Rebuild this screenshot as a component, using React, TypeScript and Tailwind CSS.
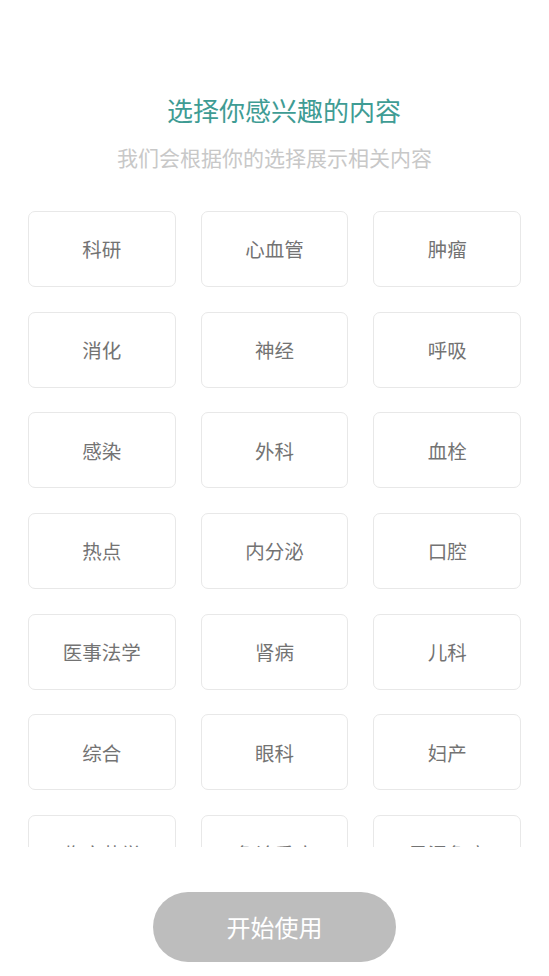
import React from 'react';

const topics = [
    '科研', '心血管', '肿瘤',
    '消化', '神经', '呼吸',
    '感染', '外科', '血栓',
    '热点', '内分泌', '口腔',
    '医事法学', '肾病', '儿科',
    '综合', '眼科', '妇产',
    '临床药学', '急诊重症', '风湿免疫',
];

export default function App() {
    return (
        <div
            className="flex flex-col h-[976px] w-[549px] bg-white overflow-hidden"
            style={{ fontFamily: '"Noto Sans CJK SC", "Noto Sans", sans-serif' }}
        >
            {/* Header */}
            <header className="flex flex-col items-center pt-[92px] pb-[39px]">
                <h1 className="ml-[19px] text-[26px] leading-[36px] font-normal text-[#3f9c94]">选择你感兴趣的内容</h1>
                <p className="mt-[14px] text-[21px] leading-[30px] text-[#c8c8c8]">我们会根据你的选择展示相关内容</p>
            </header>

            {/* Topic grid */}
            <div className="h-[636px] overflow-hidden">
                <div className="grid grid-cols-3 gap-x-[25px] gap-y-[24.7px] px-[28px]">
                    {topics.map((t) => (
                        <button
                            key={t}
                            className="h-[76px] rounded-[7px] border border-[#e8e8e8] bg-white flex items-center justify-center text-[19.5px] text-[#737373]"
                        >
                            {t}
                        </button>
                    ))}
                </div>
            </div>

            {/* Footer */}
            <footer className="flex justify-center pt-[45px]">
                <button className="w-[243px] h-[70px] rounded-full bg-[#bdbdbd] text-white text-[24px]">
                    开始使用
                </button>
            </footer>
        </div>
    );
}
